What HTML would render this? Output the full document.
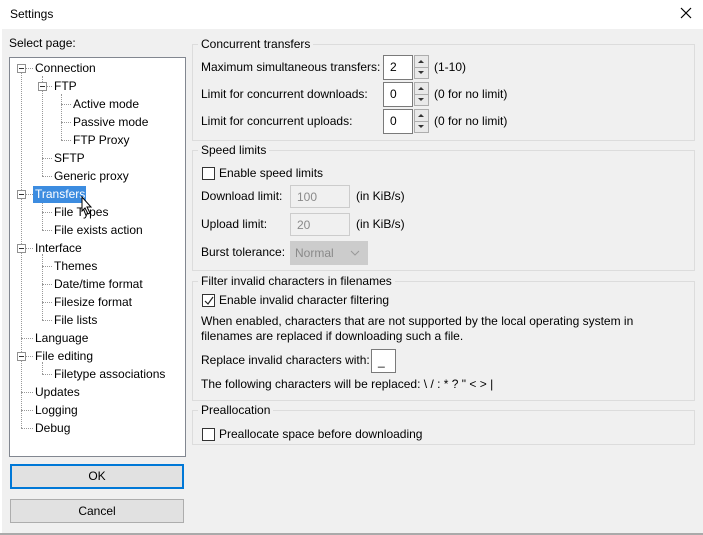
<!DOCTYPE html>
<html><head><style>
*{margin:0;padding:0;box-sizing:border-box}
body{width:703px;height:535px;background:#f0f0f0;font-family:"Liberation Sans",sans-serif;font-size:12px;color:#000;position:relative;overflow:hidden}
.a{position:absolute;white-space:nowrap;line-height:16px}
.tb{position:absolute;left:0;top:0;width:703px;height:29px;background:#fff}
.tree{position:absolute;left:9px;top:57px;width:177px;height:400px;background:#fff;border:1px solid #828790}
.h{position:absolute;border-top:1px dotted #999;height:0}
.v{position:absolute;border-left:1px dotted #999;width:0}
.pm{position:absolute;width:9px;height:9px;border:1px solid #919191;background:#fff}
.pm:after{content:"";position:absolute;left:1px;top:3px;width:5px;height:1px;background:#333}
.grp{position:absolute;left:192px;width:503px;border:1px solid #dcdcdc}
.in{position:absolute;background:#fff;border:1px solid #7a7a7a;padding-left:6px;line-height:22px}
.dis{background:#f0f0f0;border-color:#ccc;color:#8a8a8a}
.sp{position:absolute;width:15px;height:24px;border:1px solid #adadad;background:#e9e9e9}
.sp:before{content:"";position:absolute;left:3px;top:4px;border:3px solid transparent;border-bottom:3px solid #333;border-top:0}
.sp:after{content:"";position:absolute;left:3px;top:15px;border:3px solid transparent;border-top:3px solid #333;border-bottom:0}
.sp i{position:absolute;left:0;top:11px;width:13px;height:1px;background:#adadad}
.cb{position:absolute;width:13px;height:13px;border:1px solid #333;background:#fff}
.btn{position:absolute;left:10px;width:174px;background:#e1e1e1;border:1px solid #adadad;text-align:center}
</style></head><body>
<div class="tb"></div>
<div class="a" style="left:10px;top:6px">Settings</div>
<svg style="position:absolute;left:680px;top:7px" width="12" height="12"><path d="M1 1L11 11M11 1L1 11" stroke="#000" stroke-width="1.2"/></svg>
<div style="position:absolute;left:0;top:29px;width:2px;height:506px;background:#fff"></div>
<div class="a" style="left:9px;top:35px">Select page:</div>

<div class="tree"></div>
<div class="v" style="left:21px;top:68px;height:360px"></div>
<div class="v" style="left:42px;top:76px;height:100px"></div>
<div class="v" style="left:61px;top:94px;height:46px"></div>
<div class="v" style="left:42px;top:200px;height:30px"></div>
<div class="v" style="left:42px;top:254px;height:66px"></div>
<div class="v" style="left:42px;top:362px;height:12px"></div>
<div class="h" style="left:21px;top:68px;width:12px"></div>
<div class="h" style="left:42px;top:86px;width:10px"></div>
<div class="h" style="left:61px;top:104px;width:10px"></div>
<div class="h" style="left:61px;top:122px;width:10px"></div>
<div class="h" style="left:61px;top:140px;width:10px"></div>
<div class="h" style="left:42px;top:158px;width:10px"></div>
<div class="h" style="left:42px;top:176px;width:10px"></div>
<div class="h" style="left:21px;top:194px;width:12px"></div>
<div class="h" style="left:42px;top:212px;width:10px"></div>
<div class="h" style="left:42px;top:230px;width:10px"></div>
<div class="h" style="left:21px;top:248px;width:12px"></div>
<div class="h" style="left:42px;top:266px;width:10px"></div>
<div class="h" style="left:42px;top:284px;width:10px"></div>
<div class="h" style="left:42px;top:302px;width:10px"></div>
<div class="h" style="left:42px;top:320px;width:10px"></div>
<div class="h" style="left:21px;top:338px;width:12px"></div>
<div class="h" style="left:21px;top:356px;width:12px"></div>
<div class="h" style="left:42px;top:374px;width:10px"></div>
<div class="h" style="left:21px;top:392px;width:12px"></div>
<div class="h" style="left:21px;top:410px;width:12px"></div>
<div class="h" style="left:21px;top:428px;width:12px"></div>
<div class="pm" style="left:17px;top:64px"></div>
<div class="pm" style="left:38px;top:82px"></div>
<div class="pm" style="left:17px;top:190px"></div>
<div class="pm" style="left:17px;top:244px"></div>
<div class="pm" style="left:17px;top:352px"></div>
<div style="position:absolute;left:33px;top:186px;width:53px;height:17px;background:#3c8ce0"></div>
<div class="a" style="left:35px;top:60px">Connection</div>
<div class="a" style="left:54px;top:78px">FTP</div>
<div class="a" style="left:73px;top:96px">Active mode</div>
<div class="a" style="left:73px;top:114px">Passive mode</div>
<div class="a" style="left:73px;top:132px">FTP Proxy</div>
<div class="a" style="left:54px;top:150px">SFTP</div>
<div class="a" style="left:54px;top:168px">Generic proxy</div>
<div class="a" style="left:35px;top:186px;color:#fff">Transfers</div>
<div class="a" style="left:54px;top:204px">File Types</div>
<div class="a" style="left:54px;top:222px">File exists action</div>
<div class="a" style="left:35px;top:240px">Interface</div>
<div class="a" style="left:54px;top:258px">Themes</div>
<div class="a" style="left:54px;top:276px">Date/time format</div>
<div class="a" style="left:54px;top:294px">Filesize format</div>
<div class="a" style="left:54px;top:312px">File lists</div>
<div class="a" style="left:35px;top:330px">Language</div>
<div class="a" style="left:35px;top:348px">File editing</div>
<div class="a" style="left:54px;top:366px">Filetype associations</div>
<div class="a" style="left:35px;top:384px">Updates</div>
<div class="a" style="left:35px;top:402px">Logging</div>
<div class="a" style="left:35px;top:420px">Debug</div>
<svg style="position:absolute;left:81px;top:196px" width="12" height="20"><path d="M1 1L1 15L4 12L7 18L9 17L6 11L10 11Z" fill="#fff" stroke="#000" stroke-width="1"/></svg>

<div class="btn" style="top:464px;height:25px;line-height:21px;border:2px solid #0078d7">OK</div>
<div class="btn" style="top:499px;height:24px;line-height:22px">Cancel</div>

<div class="grp" style="top:44px;height:97px"></div>
<div class="a" style="left:198px;top:36px;background:#f0f0f0;padding:0 3px">Concurrent transfers</div>
<div class="a" style="left:201px;top:59px">Maximum simultaneous transfers:</div>
<div class="in" style="left:383px;top:55px;width:30px;height:25px">2</div>
<div class="sp" style="left:414px;top:55px"><i></i></div>
<div class="a" style="left:434px;top:59px">(1-10)</div>
<div class="a" style="left:201px;top:86px">Limit for concurrent downloads:</div>
<div class="in" style="left:383px;top:82px;width:30px;height:25px">0</div>
<div class="sp" style="left:414px;top:82px"><i></i></div>
<div class="a" style="left:434px;top:86px">(0 for no limit)</div>
<div class="a" style="left:201px;top:113px">Limit for concurrent uploads:</div>
<div class="in" style="left:383px;top:109px;width:30px;height:25px">0</div>
<div class="sp" style="left:414px;top:109px"><i></i></div>
<div class="a" style="left:434px;top:113px">(0 for no limit)</div>

<div class="grp" style="top:150px;height:121px"></div>
<div class="a" style="left:198px;top:142px;background:#f0f0f0;padding:0 3px">Speed limits</div>
<div class="cb" style="left:202px;top:167px"></div>
<div class="a" style="left:219px;top:165px">Enable speed limits</div>
<div class="a" style="left:201px;top:188px">Download limit:</div>
<div class="in dis" style="left:290px;top:185px;width:60px;height:23px">100</div>
<div class="a" style="left:356px;top:188px">(in KiB/s)</div>
<div class="a" style="left:201px;top:216px">Upload limit:</div>
<div class="in dis" style="left:290px;top:213px;width:60px;height:23px">20</div>
<div class="a" style="left:356px;top:216px">(in KiB/s)</div>
<div class="a" style="left:201px;top:244px">Burst tolerance:</div>
<div class="in dis" style="left:290px;top:241px;width:78px;height:24px;background:#cccccc;border-color:#ccc;padding-left:4px">Normal</div>
<svg style="position:absolute;left:350px;top:250px" width="10" height="6"><path d="M1 1L5 5L9 1" stroke="#999" fill="none"/></svg>

<div class="grp" style="top:281px;height:120px"></div>
<div class="a" style="left:198px;top:273px;background:#f0f0f0;padding:0 3px">Filter invalid characters in filenames</div>
<div class="cb" style="left:202px;top:294px"></div>
<svg style="position:absolute;left:203px;top:295px" width="12" height="12"><path d="M2 6L5 9L10 2" stroke="#222" fill="none" stroke-width="1.2"/></svg>
<div class="a" style="left:219px;top:292px">Enable invalid character filtering</div>
<div class="a" style="left:201px;top:313px">When enabled, characters that are not supported by the local operating system in</div>
<div class="a" style="left:201px;top:328px">filenames are replaced if downloading such a file.</div>
<div class="a" style="left:201px;top:352px">Replace invalid characters with:</div>
<div class="in" style="left:371px;top:349px;width:25px;height:24px">_</div>
<div class="a" style="left:201px;top:376px">The following characters will be replaced: \ / : * ? " &lt; &gt; |</div>

<div class="grp" style="top:410px;height:35px"></div>
<div class="a" style="left:198px;top:402px;background:#f0f0f0;padding:0 3px">Preallocation</div>
<div class="cb" style="left:202px;top:428px"></div>
<div class="a" style="left:219px;top:426px">Preallocate space before downloading</div>
<div style="position:absolute;left:0;top:533px;width:703px;height:2px;background:#aaa"></div>
</body></html>
